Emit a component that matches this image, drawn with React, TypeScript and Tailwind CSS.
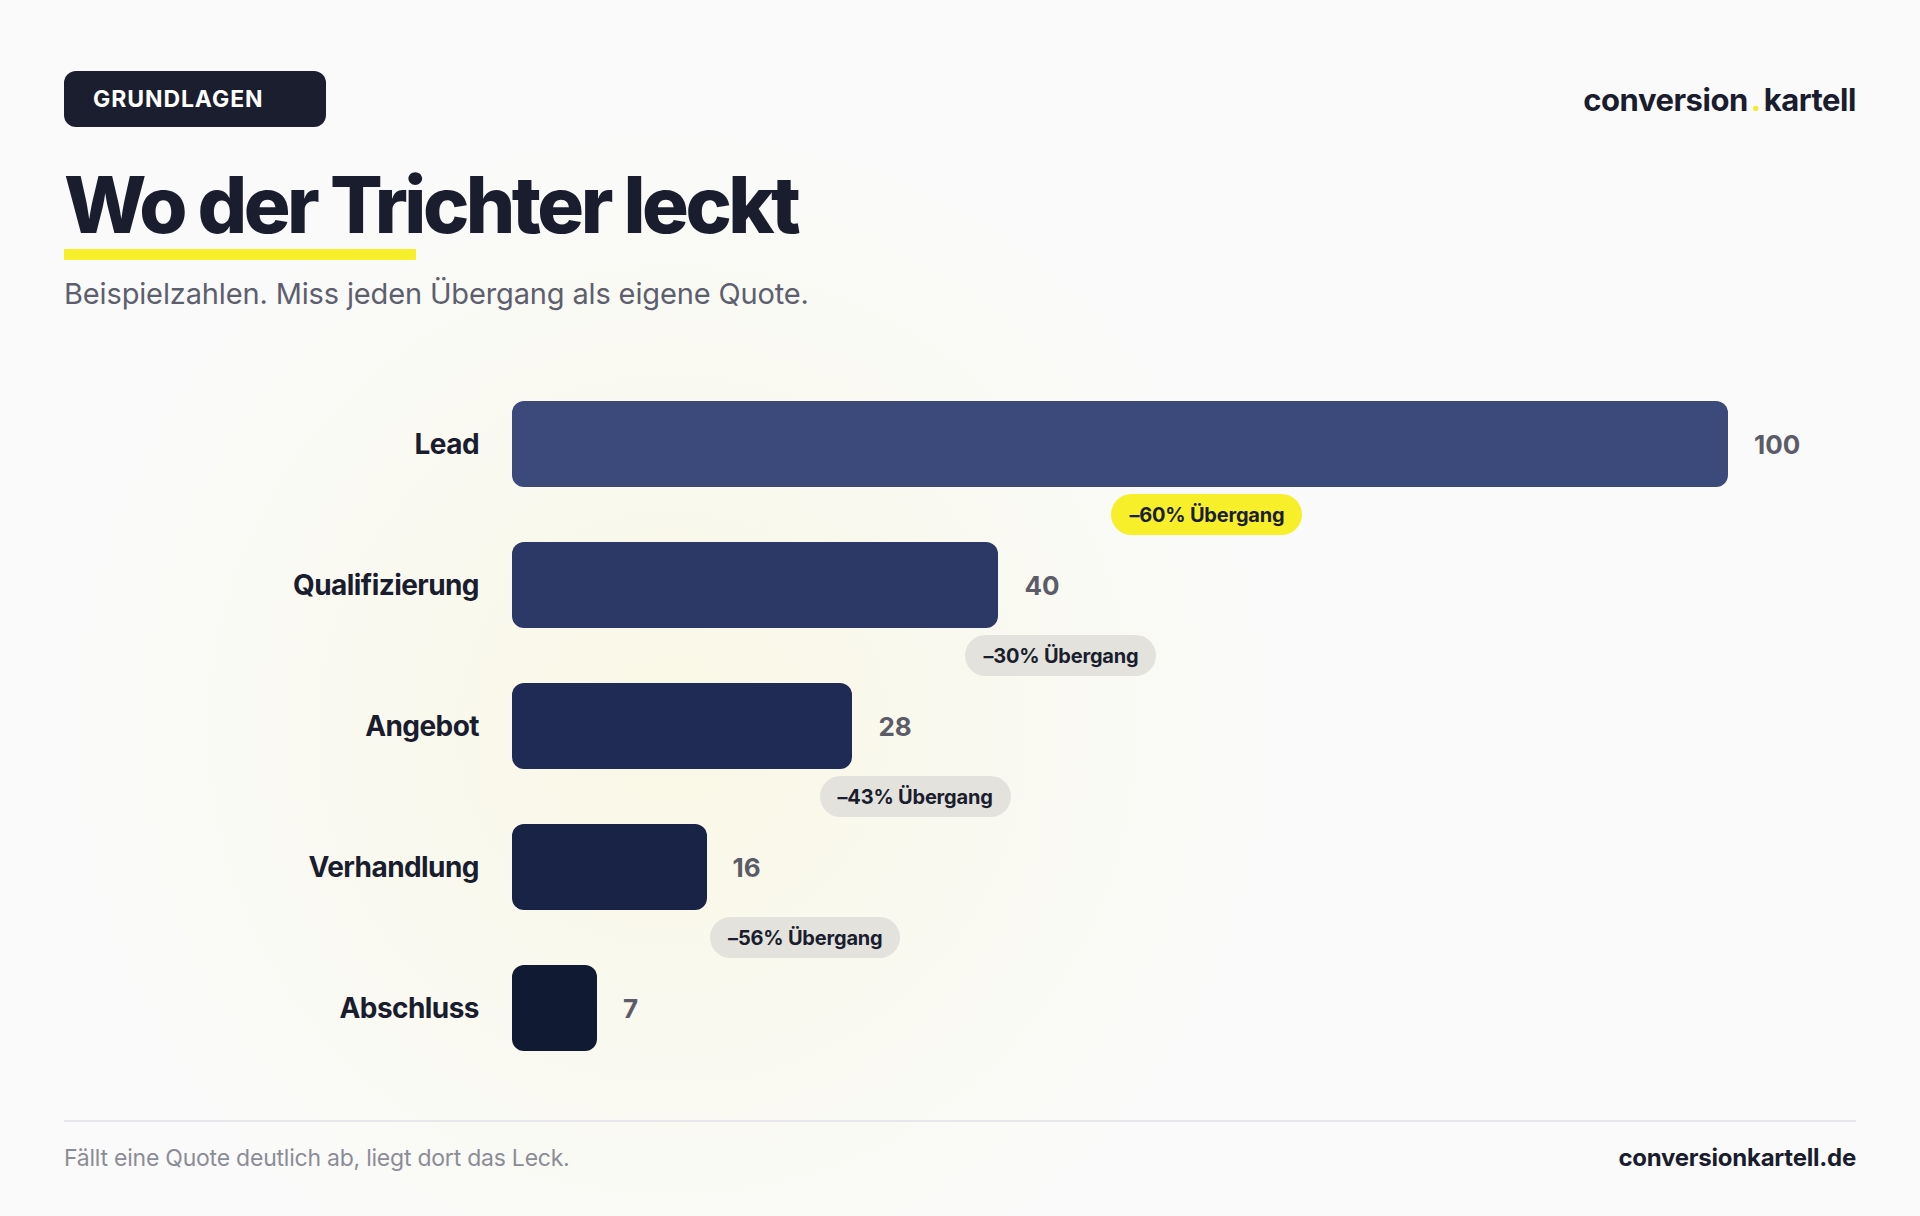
const stages = [
  { label: 'Lead', value: 100, color: 'bg-[#3b4a7a]' },
  { label: 'Qualifizierung', value: 40, color: 'bg-[#2c3866]' },
  { label: 'Angebot', value: 28, color: 'bg-[#1f2b55]' },
  { label: 'Verhandlung', value: 16, color: 'bg-[#182345]' },
  { label: 'Abschluss', value: 7, color: 'bg-[#111a33]' },
]

const drops = ['–60% Übergang', '–30% Übergang', '–43% Übergang', '–56% Übergang']

const TRACK = 1216

export default function App() {
  return (
    <div className="w-[1920px] h-[1216px] overflow-hidden bg-[#fafafa] bg-[radial-gradient(circle_at_35%_60%,rgba(244,236,120,0.16)_0%,rgba(250,250,250,0)_42%)] font-['Inter',sans-serif] text-[#1a1d2e]">
      <div className="px-16 pt-[71px]">
        {/* Header */}
        <div className="flex justify-between items-start">
          <div className="h-[56px] w-[262px] rounded-[12px] bg-[#1b1e2e] flex items-center pl-[29px] text-white text-[23px] font-bold tracking-[0.04em]">
            GRUNDLAGEN
          </div>
          <div className="mt-[11px] leading-[36px] text-[31px] font-bold tracking-[-0.015em] text-[#1a1d2e]">
            conversion<span className="text-[#f5e92a] mx-[3px]">.</span>kartell
          </div>
        </div>

        {/* Title */}
        <h1 className="mt-[39px] text-[78px] leading-none font-extrabold tracking-[-0.045em]">
          Wo der Trichter leckt
        </h1>
        <div className="mt-[5px] h-[11px] w-[352px] bg-[#f7ef2a]" />
        <p className="mt-[19px] text-[29px] leading-none text-[#5d5f6e] tracking-[-0.005em]">
          Beispielzahlen. Miss jeden Übergang als eigene Quote.
        </p>

        {/* Funnel chart */}
        <div className="mt-[93px]">
          {stages.map((s, i) => (
            <div key={s.label}>
              <div className="h-[86px] flex items-center">
                <div className="w-[415px] text-right text-[28px] font-bold tracking-[-0.02em]">{s.label}</div>
                <div
                  className={`ml-[33px] h-[86px] rounded-[12px] ${s.color}`}
                  style={{ width: (TRACK * s.value) / 100 }}
                />
                <div className="ml-[26px] text-[26px] font-bold text-[#5b5c68]">{s.value}</div>
              </div>
              {i < drops.length && (
                <div className="h-[55px] flex items-center pl-[448px]">
                  <div
                    className={`h-[41px] px-[18px] rounded-full inline-flex items-center text-[20px] font-bold tracking-[-0.01em] ${
                      i === 0 ? 'bg-[#f7ef2a]' : 'bg-[#e3e2dc]'
                    }`}
                    style={{ marginLeft: (TRACK * stages[i + 1].value) / 100 + 113 }}
                  >
                    {drops[i]}
                  </div>
                </div>
              )}
            </div>
          ))}
        </div>

        {/* Footer */}
        <div className="mt-[69px] h-[2px] bg-[#e6e6eb]" />
        <div className="mt-[24px] flex justify-between items-center leading-none">
          <span className="text-[23px] text-[#8b8d96] tracking-[-0.01em]">
            Fällt eine Quote deutlich ab, liegt dort das Leck.
          </span>
          <span className="text-[24px] font-bold tracking-[-0.01em]">conversionkartell.de</span>
        </div>
      </div>
    </div>
  )
}
